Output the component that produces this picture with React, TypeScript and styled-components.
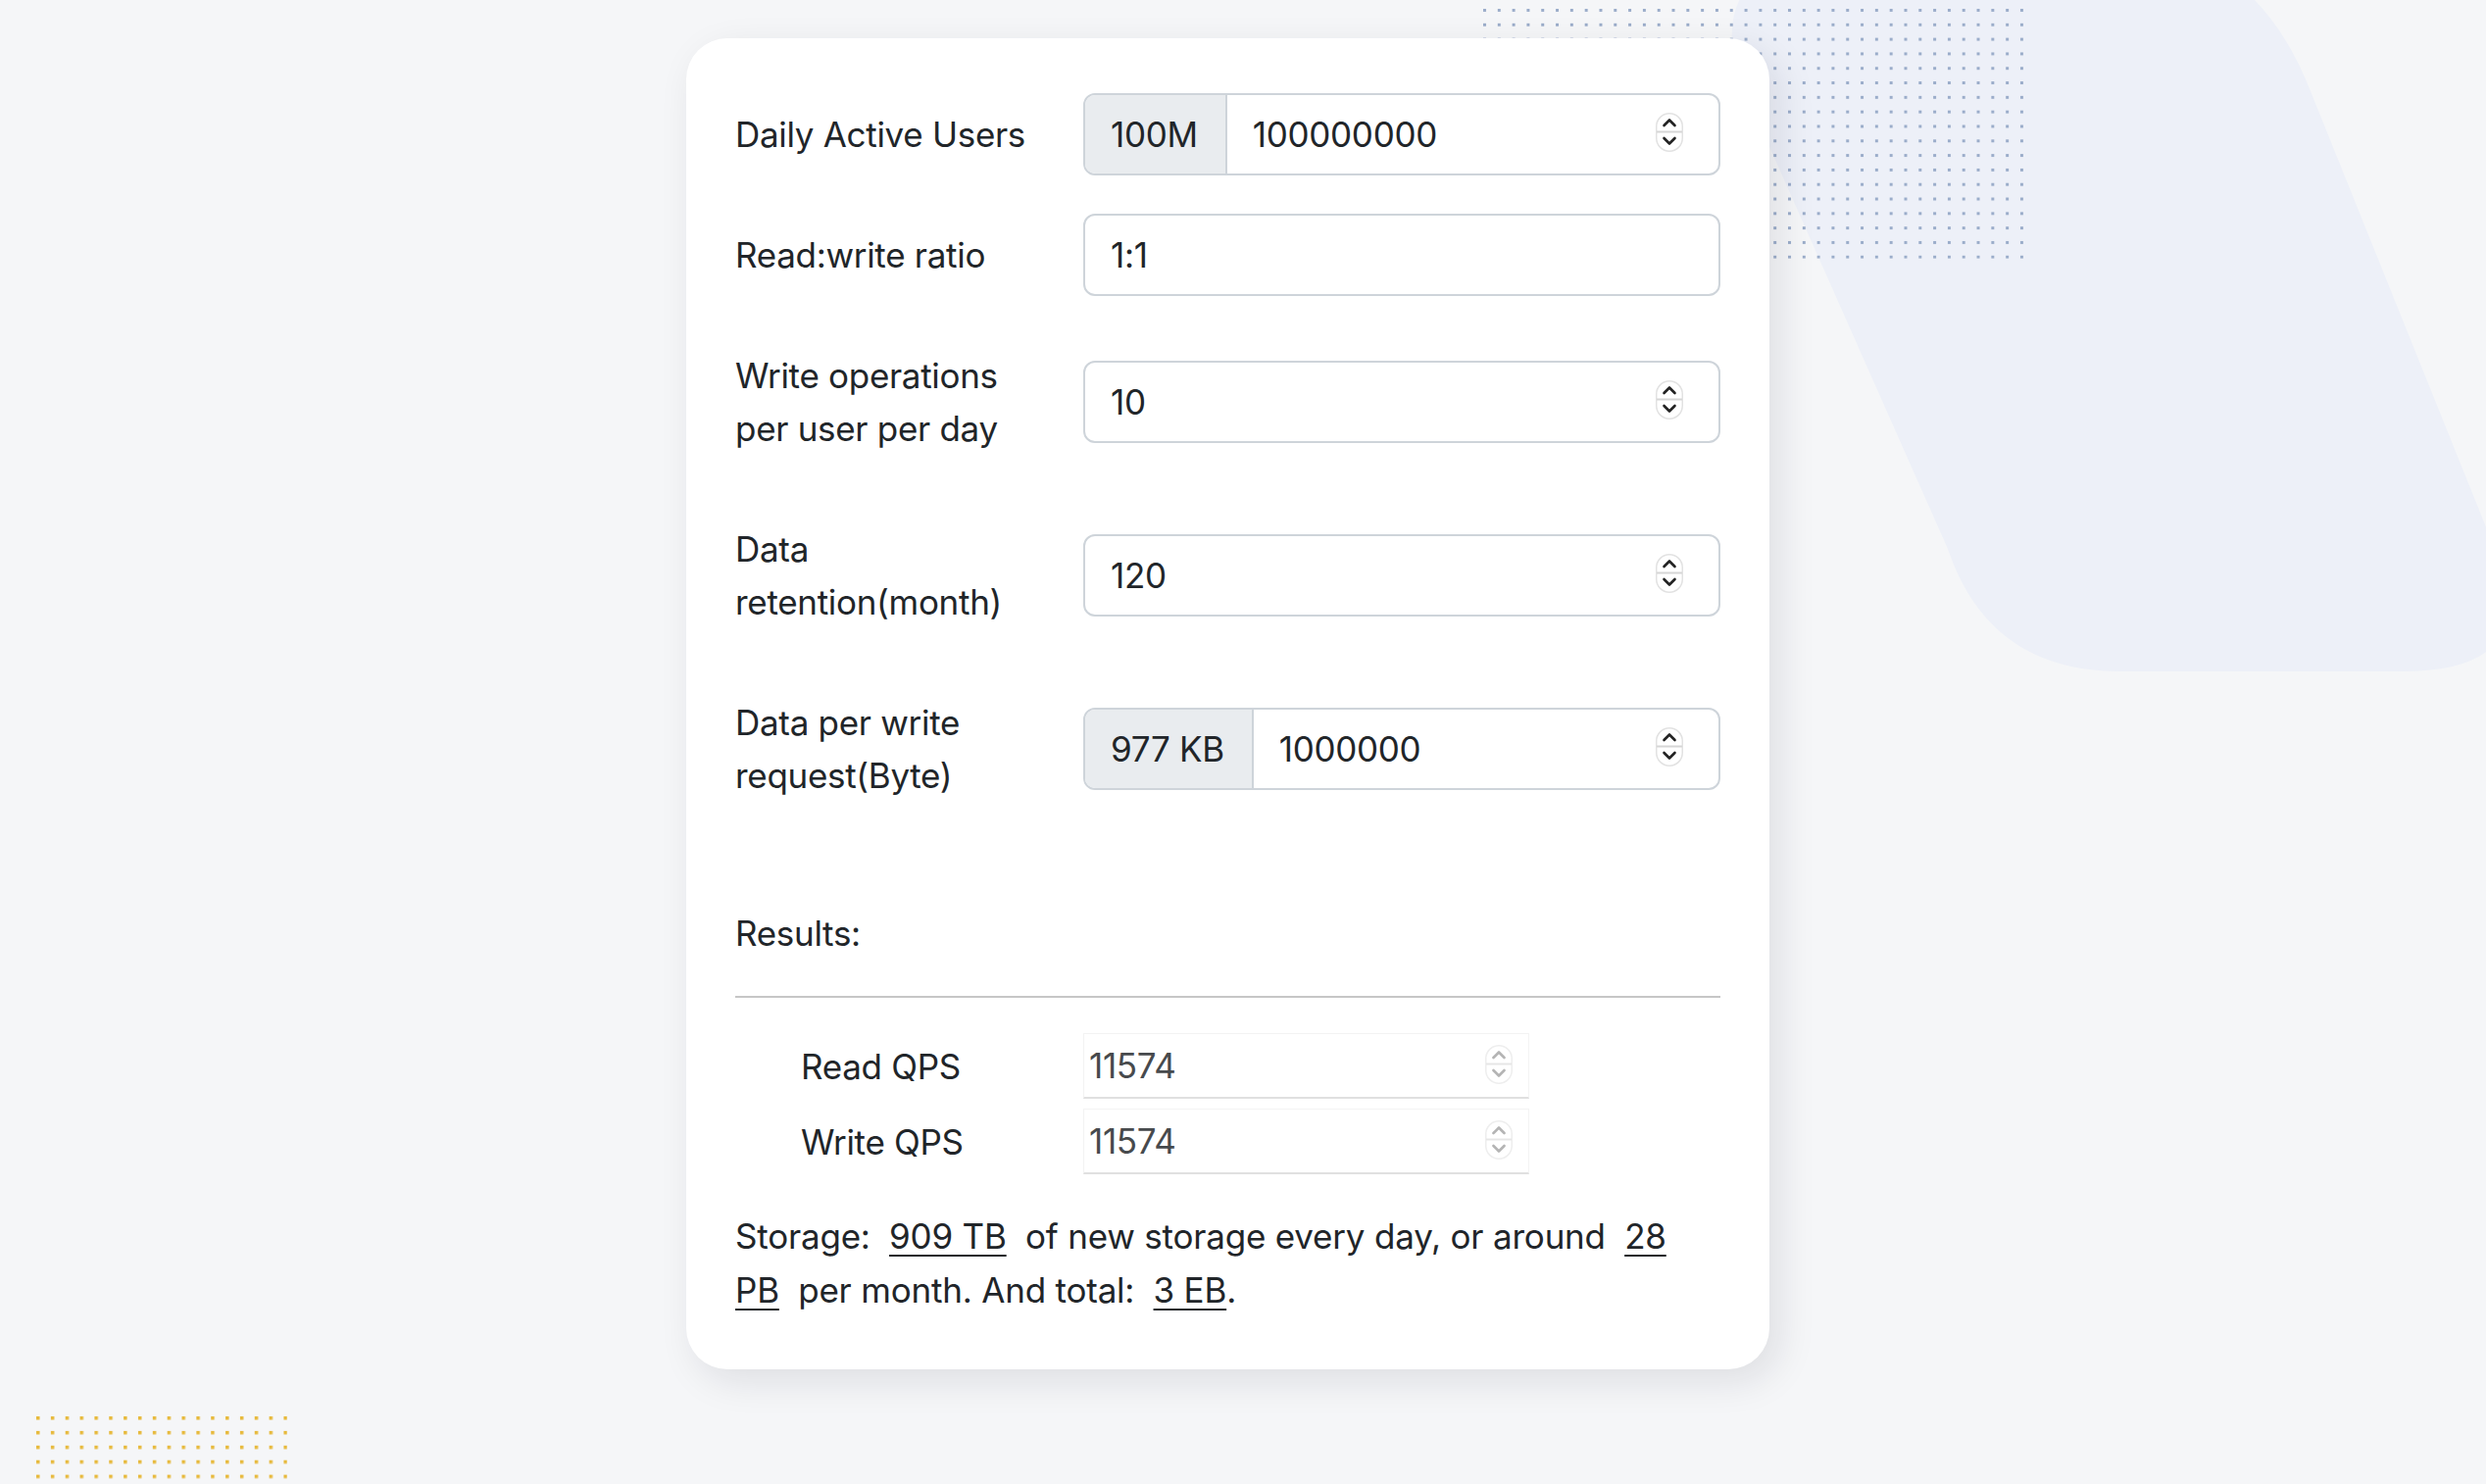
import React from "react";
import styled, { createGlobalStyle } from "styled-components";

const GlobalStyle = createGlobalStyle`
  html, body { margin: 0; padding: 0; background: #f5f6f8; }
  body { font-family: Inter, "Liberation Sans", sans-serif; color: #212529; }
  * { box-sizing: border-box; }
  input { font-family: inherit; }
`;

const Page = styled.div`
  position: relative;
  width: 2536px;
  height: 1514px;
  overflow: hidden;
  padding: 39px 0 0 700px;
`;

const Backdrop = styled.svg`
  position: absolute;
  top: 0;
  left: 0;
  width: 2536px;
  height: 1514px;
  pointer-events: none;
  z-index: 0;
`;

const Card = styled.main`
  position: relative;
  z-index: 1;
  width: 1105px;
  background: #ffffff;
  border-radius: 42px;
  padding: 56px 50px 53px;
  box-shadow: 10px 12px 38px rgba(20, 24, 40, 0.1);
`;

const FormRow = styled.div`
  display: grid;
  grid-template-columns: 355px 650px;
  align-items: center;
  & + & {
    margin-top: 39px;
  }
`;

const Label = styled.label`
  font-size: 35px;
  line-height: 54px;
  letter-spacing: -0.3px;
  padding: 15px 35px 15px 0;
  color: #212529;
`;

const InputGroup = styled.div`
  display: flex;
  align-items: center;
  height: 84px;
  border: 2px solid #ced4da;
  border-radius: 12px;
  overflow: hidden;
  background: #fff;
`;

const Addon = styled.span`
  display: flex;
  align-items: center;
  height: 100%;
  padding: 0 28px 0 26px;
  background: #e9ecef;
  border-right: 2px solid #ced4da;
  font-size: 35px;
  letter-spacing: -0.3px;
  color: #212529;
  white-space: nowrap;
`;

const Field = styled.input<{ $muted?: boolean }>`
  flex: 1;
  min-width: 0;
  height: 100%;
  border: none;
  outline: none;
  background: transparent;
  padding: 0 ${(p) => (p.$muted ? "5px" : "26px")};
  font-size: 35px;
  letter-spacing: -0.3px;
  color: ${(p) => (p.$muted ? "#474a4d" : "#212529")};
`;

const StepperSvg = styled.svg<{ $muted?: boolean }>`
  flex-shrink: 0;
  width: 28px;
  height: 40px;
  margin-right: ${(p) => (p.$muted ? "16px" : "36px")};
  margin-bottom: ${(p) => (p.$muted ? "2px" : "4px")};
`;

const Stepper = ({ muted }: { muted?: boolean }) => (
  <StepperSvg viewBox="0 0 28 40" $muted={muted}>
    <rect
      x="0.75"
      y="0.75"
      width="26.5"
      height="38.5"
      rx="13.25"
      fill="#fff"
      stroke={muted ? "#eeeeee" : "#e2e2e2"}
      strokeWidth="1.5"
    />
    <line x1="1" y1="19.5" x2="27" y2="19.5" stroke={muted ? "#e6e6e6" : "#d6d6d6"} strokeWidth="2" />
    <polyline
      points="8.5,13 14,7.5 19.5,13"
      fill="none"
      stroke={muted ? "#b4b4b4" : "#222"}
      strokeWidth="2.6"
      strokeLinecap="round"
      strokeLinejoin="round"
    />
    <polyline
      points="8.5,26 14,31.5 19.5,26"
      fill="none"
      stroke={muted ? "#b4b4b4" : "#222"}
      strokeWidth="2.6"
      strokeLinecap="round"
      strokeLinejoin="round"
    />
  </StepperSvg>
);

const ResultsHeading = styled.div`
  margin-top: 92px;
  font-size: 35px;
  line-height: 54px;
  letter-spacing: -0.3px;
`;

const Divider = styled.hr`
  margin: 37px 0 0;
  border: none;
  height: 2px;
  background: #c6c6c6;
`;

const QpsList = styled.div`
  display: flex;
  flex-direction: column;
  gap: 10px;
  margin-top: 36px;
`;

const QpsRow = styled.div`
  display: grid;
  grid-template-columns: 288px 455px;
  align-items: center;
  padding-left: 67px;
`;

const QpsLabel = styled.span`
  font-size: 35px;
  line-height: 54px;
  letter-spacing: -0.3px;
`;

const QpsField = styled.div`
  display: flex;
  align-items: center;
  height: 67px;
  border: 1px solid #f3f3f3;
  border-bottom: 2px solid #e0e0e0;
  background: #fff;
`;

const Storage = styled.p`
  margin: 36px 0 0;
  max-width: 985px;
  font-size: 35px;
  line-height: 55px;
  letter-spacing: -0.2px;
`;

const Amount = styled.span`
  text-decoration: underline;
  text-decoration-thickness: 2px;
  text-underline-offset: 6px;
`;

type FieldDef = { label: string; value: string; addon?: string; stepper: boolean };

const fields: FieldDef[] = [
  { label: "Daily Active Users", value: "100000000", addon: "100M", stepper: true },
  { label: "Read:write ratio", value: "1:1", stepper: false },
  { label: "Write operations per user per day", value: "10", stepper: true },
  { label: "Data retention(month)", value: "120", stepper: true },
  { label: "Data per write request(Byte)", value: "1000000", addon: "977 KB", stepper: true },
];

const qps = [
  { label: "Read QPS", value: "11574" },
  { label: "Write QPS", value: "11574" },
];

const DotsLayer = () => (
  <>
    <defs>
      <pattern id="blueDots" x="1513" y="9" width="14.81" height="14.81" patternUnits="userSpaceOnUse">
        <rect width="3" height="3" fill="#9badca" />
      </pattern>
      <pattern id="yellowDots" x="37" y="1445" width="14.85" height="14.9" patternUnits="userSpaceOnUse">
        <rect width="3.5" height="3.5" fill="#e7b93b" />
      </pattern>
    </defs>
    <rect x="1513" y="9" width="552.9" height="254.8" fill="url(#blueDots)" />
    <rect x="37" y="1445" width="256" height="80" fill="url(#yellowDots)" />
  </>
);

export default function App() {
  return (
    <>
      <GlobalStyle />
      <Page>
        <Backdrop viewBox="0 0 2536 1514">
          <path
            d="M 1950 -60 L 2150 -60 Q 2297 -60 2357 93 L 2547 565 Q 2595 685 2450 685 L 2163 685 Q 2029 685 1987 560 L 1783 100 Q 1712 -60 1950 -60 Z"
            fill="#edf0f8"
          />
          <DotsLayer />
        </Backdrop>
        <Card>
          {fields.map((f) => (
            <FormRow key={f.label}>
              <Label>{f.label}</Label>
              <InputGroup>
                {f.addon && <Addon>{f.addon}</Addon>}
                <Field type="text" defaultValue={f.value} />
                {f.stepper && <Stepper />}
              </InputGroup>
            </FormRow>
          ))}
          <ResultsHeading>Results:</ResultsHeading>
          <Divider />
          <QpsList>
            {qps.map((q) => (
              <QpsRow key={q.label}>
                <QpsLabel>{q.label}</QpsLabel>
                <QpsField>
                  <Field type="text" readOnly defaultValue={q.value} $muted />
                  <Stepper muted />
                </QpsField>
              </QpsRow>
            ))}
          </QpsList>
          <Storage>
            Storage:{"\u00a0 "}
            <Amount>909 TB</Amount>
            {"\u00a0 "}of new storage every day, or around{"\u00a0 "}
            <Amount>28</Amount> <Amount>PB</Amount>
            {"\u00a0 "}per month. And total:{"\u00a0 "}
            <Amount>3 EB</Amount>.
          </Storage>
        </Card>
      </Page>
    </>
  );
}
